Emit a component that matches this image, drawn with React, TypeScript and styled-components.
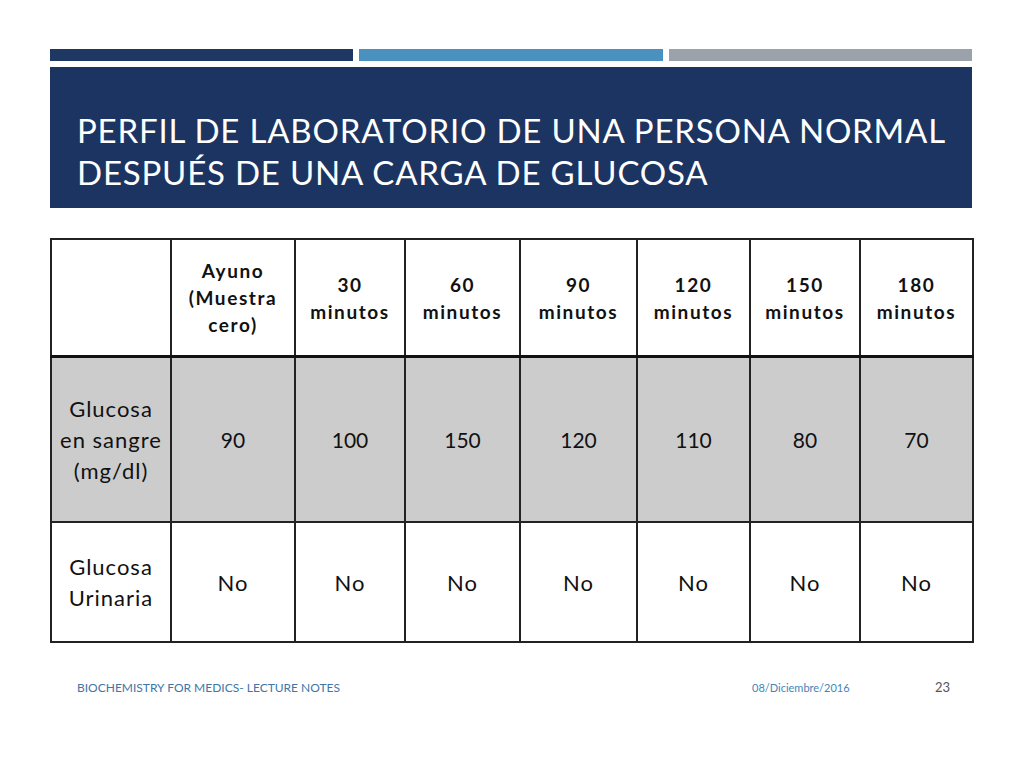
import React from "react";
import styled, { createGlobalStyle } from "styled-components";

const Global = createGlobalStyle`
  html, body { margin: 0; padding: 0; background: #ffffff; }
  body { width: 1024px; height: 768px; overflow: hidden; font-family: Lato, "Open Sans", sans-serif; }
`;

const Slide = styled.div`
  width: 1024px;
  height: 768px;
  box-sizing: border-box;
  padding: 49px 52px 0 50px;
  display: flex;
  flex-direction: column;
`;

const Bars = styled.div`
  display: grid;
  grid-template-columns: 1fr 1fr 1fr;
  gap: 6px;
  height: 12px;
`;

const Bar = styled.div<{ $c: string }>`
  background: ${(p) => p.$c};
`;

const TitleBox = styled.div`
  margin-top: 6px;
  height: 141px;
  background: #1c3461;
  box-sizing: border-box;
  padding: 42px 0 0 27px;
`;

const Title = styled.h1`
  margin: 0;
  font-family: Lato, sans-serif;
  font-weight: 400;
  font-size: 33px;
  line-height: 42px;
  color: #ffffff;
  letter-spacing: 0.8px;
  white-space: nowrap;
`;

const Table = styled.table`
  margin-top: 30px;
  width: 922px;
  border-collapse: collapse;
  table-layout: fixed;
  font-family: Lato, sans-serif;
  color: #111;
`;

const Th = styled.th`
  border: 2px solid #222;
  height: 115px;
  font-size: 19px;
  line-height: 27px;
  font-weight: 700;
  letter-spacing: 1.6px;
  text-align: center;
  vertical-align: middle;
  padding: 0;
`;

const HeadRow = styled.tr`
  border-bottom: 3px solid #111;
`;

const Td = styled.td<{ $h: number; $shade?: boolean; $num?: boolean }>`
  border: 2px solid #222;
  height: ${(p) => p.$h}px;
  background: ${(p) => (p.$shade ? "#cccccc" : "#ffffff")};
  font-size: ${(p) => (p.$num ? "21px" : "22px")};
  letter-spacing: ${(p) => (p.$num ? "0" : "1px")};
  line-height: 31px;
  text-align: center;
  vertical-align: middle;
  padding: 0;
  white-space: nowrap;
`;

const Footer = styled.div`
  margin-top: 36px;
  display: flex;
  align-items: center;
  padding-left: 27px;
  font-family: Lato, sans-serif;
  font-size: 12px;
`;

const FootLeft = styled.span`
  color: #3f76a8;
  flex: 1;
`;

const FootDate = styled.span`
  color: #4585b5;
  font-size: 11px;
  width: 183px;
`;

const FootNum = styled.span`
  color: #555;
  width: 37px;
  font-size: 13px;
`;

const widths = [120, 124, 110, 115, 117, 113, 110, 113];
const heads = [
  "",
  "Ayuno\n(Muestra\ncero)",
  "30\nminutos",
  "60\nminutos",
  "90\nminutos",
  "120\nminutos",
  "150\nminutos",
  "180\nminutos",
];
const blood = ["90", "100", "150", "120", "110", "80", "70"];

const lines = (s: string) =>
  s.split("\n").map((l, i, a) => (
    <React.Fragment key={i}>
      {l}
      {i < a.length - 1 && <br />}
    </React.Fragment>
  ));

export default function App() {
  return (
    <>
      <Global />
      <Slide>
        <Bars>
          <Bar $c="#1f3763" />
          <Bar $c="#4a91c0" />
          <Bar $c="#9ba2aa" />
        </Bars>
        <TitleBox>
          <Title>
            PERFIL DE LABORATORIO DE UNA PERSONA NORMAL
            <br />
            DESPUÉS DE UNA CARGA DE GLUCOSA
          </Title>
        </TitleBox>
        <Table>
          <colgroup>
            {widths.map((w, i) => (
              <col key={i} style={{ width: w }} />
            ))}
          </colgroup>
          <thead>
            <HeadRow>
              {heads.map((h, i) => (
                <Th key={i}>{lines(h)}</Th>
              ))}
            </HeadRow>
          </thead>
          <tbody>
            <tr>
              <Td $h={163} $shade>
                Glucosa
                <br />
                en sangre
                <br />
                (mg/dl)
              </Td>
              {blood.map((b, i) => (
                <Td key={i} $h={163} $shade $num>
                  {b}
                </Td>
              ))}
            </tr>
            <tr>
              <Td $h={118}>
                Glucosa
                <br />
                Urinaria
              </Td>
              {blood.map((_, i) => (
                <Td key={i} $h={118}>
                  No
                </Td>
              ))}
            </tr>
          </tbody>
        </Table>
        <Footer>
          <FootLeft>BIOCHEMISTRY FOR MEDICS- LECTURE NOTES</FootLeft>
          <FootDate>08/Diciembre/2016</FootDate>
          <FootNum>23</FootNum>
        </Footer>
      </Slide>
    </>
  );
}
